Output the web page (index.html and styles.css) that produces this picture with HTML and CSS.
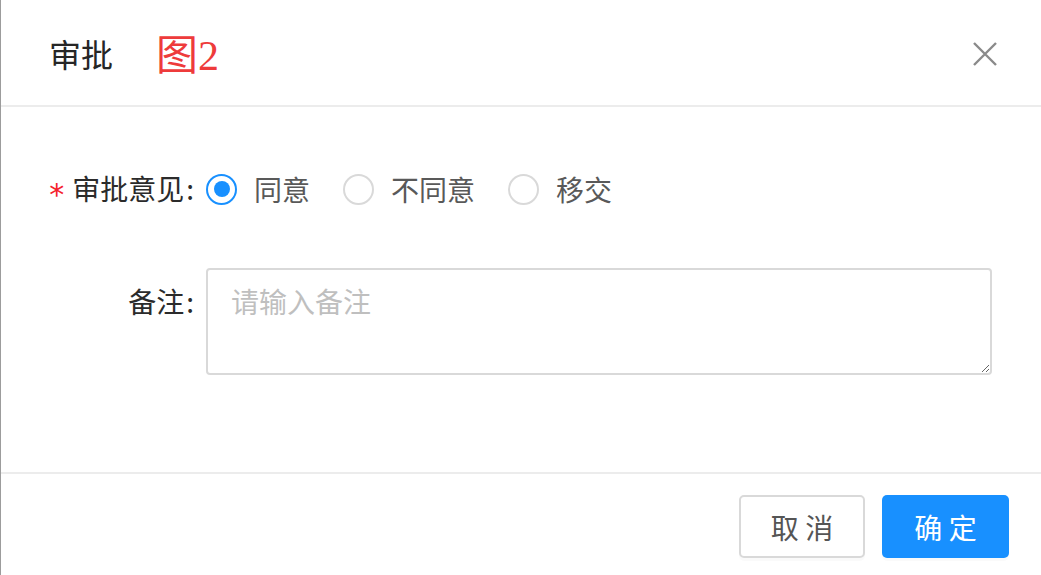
FILE: index.html
```html
<!DOCTYPE html>
<html lang="zh">
<head>
<meta charset="utf-8">
<link rel="stylesheet" href="styles.css">
</head>
<body>
<div class="modal">
  <div class="header">
    <span class="title">审批</span>
    <span class="tag">图2</span>
    <span class="close">
      <svg width="26" height="26" viewBox="0 0 26 26"><path d="M2 2 L24 24 M24 2 L2 24" stroke="#8a8a8a" stroke-width="2.4" fill="none"/></svg>
    </span>
  </div>
  <div class="body">
    <div class="row row-radio">
      <div class="label"><span class="req">*</span>审批意见<span class="colon">:</span></div>
      <div class="control radios">
        <label class="radio checked"><span class="dot"></span><span class="rtext">同意</span></label>
        <label class="radio"><span class="dot"></span><span class="rtext">不同意</span></label>
        <label class="radio"><span class="dot"></span><span class="rtext">移交</span></label>
      </div>
    </div>
    <div class="row row-note">
      <div class="label">备注<span class="colon">:</span></div>
      <div class="control">
        <textarea class="note" placeholder="请输入备注"></textarea>
      </div>
    </div>
  </div>
  <div class="footer">
    <button class="btn btn-cancel">取 消</button>
    <button class="btn btn-ok">确 定</button>
  </div>
</div>
</body>
</html>
```
FILE: styles.css
```css
html, body {
  margin: 0;
  padding: 0;
  background: #fff;
}
body {
  font-family: "Noto Sans CJK SC", "Noto Sans", sans-serif;
}
.modal {
  width: 1040px;
  height: 575px;
  border-left: 1px solid #9c9c9c;
  display: flex;
  flex-direction: column;
  background: #fff;
}
.header {
  height: 105px;
  border-bottom: 2px solid #ececec;
  display: flex;
  align-items: center;
  padding-left: 48px;
  padding-right: 43px;
}
.title {
  font-size: 32px;
  color: #262626;
  line-height: 1;
}
.tag {
  margin-left: 43px;
  font-family: "Liberation Serif", "Noto Sans CJK SC", serif;
  font-size: 42px;
  color: #ee3b3b;
  line-height: 1;
  margin-top: 6px;
}
.close {
  margin-left: auto;
  display: flex;
  margin-top: 2px;
}
.body {
  flex: 1;
  padding: 62px 49px 0 0;
  border-bottom: 2px solid #ececec;
}
.row {
  display: flex;
}
.label {
  width: 193px;
  text-align: right;
  font-size: 28px;
  color: #2b2b2b;
  padding-right: 12px;
  flex-shrink: 0;
  white-space: nowrap;
}
.req {
  color: #f5222d;
  font-family: "DejaVu Sans", sans-serif;
  margin-right: 8px;
  font-size: 30px;
  position: relative;
  top: 5px;
}
.colon {
  margin-left: 2px;
}
.row-radio {
  height: 40px;
  align-items: center;
}
.row-radio .label {
  line-height: 40px;
}
.radios {
  display: flex;
  align-items: center;
}
.radio {
  display: flex;
  align-items: center;
  margin-right: 33px;
}
.dot {
  width: 27px;
  height: 27px;
  border: 2px solid #d9d9d9;
  border-radius: 50%;
  position: relative;
  margin-right: 17px;
}
.checked .dot {
  border-color: #1890ff;
}
.checked .dot::after {
  content: "";
  position: absolute;
  left: 5.5px;
  top: 5.5px;
  width: 16px;
  height: 16px;
  border-radius: 50%;
  background: #1890ff;
}
.rtext {
  font-size: 28px;
  color: #595959;
  line-height: 40px;
}
.row-note {
  margin-top: 59px;
}
.row-note .label {
  line-height: 36px;
  padding-top: 15px;
}
.control {
  flex: 1;
  display: flex;
}
.note {
  flex: 1;
  height: 107px;
  box-sizing: border-box;
  border: 2px solid #d9d9d9;
  border-radius: 4px;
  padding: 13px 23px;
  font-family: "Noto Sans CJK SC", sans-serif;
  font-size: 28px;
  line-height: 36px;
  color: #333;
  margin: 0;
  outline: none;
}
.note::placeholder {
  color: #bfbfbf;
}
.footer {
  height: 101px;
  display: flex;
  justify-content: flex-end;
  align-items: flex-start;
  padding: 21px 32px 0 0;
  box-sizing: border-box;
  gap: 17px;
}
.btn {
  height: 63px;
  border-radius: 5px;
  font-family: "Noto Sans CJK SC", sans-serif;
  font-size: 28px;
  padding: 0;
  cursor: pointer;
  box-shadow: 0 3px 0 rgba(0, 0, 0, 0.02);
}
.btn-cancel {
  width: 126px;
  background: #fff;
  border: 2px solid #d9d9d9;
  color: #555;
}
.btn-ok {
  width: 127px;
  background: #1890ff;
  border: none;
  color: #fff;
}
```
